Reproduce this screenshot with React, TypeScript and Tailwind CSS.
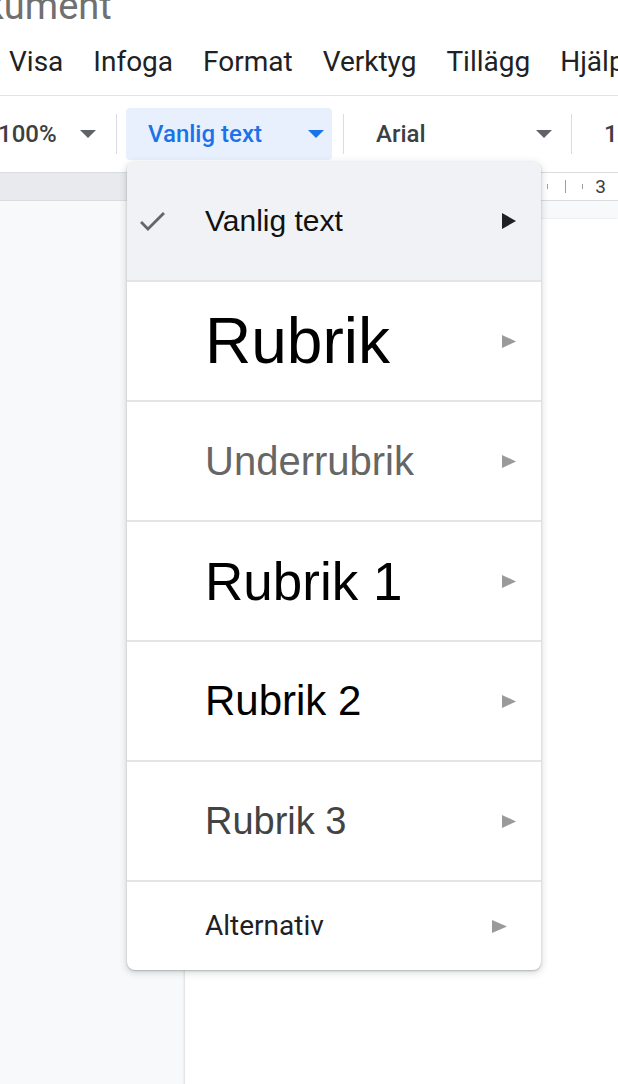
const menus = ["Visa", "Infoga", "Format", "Verktyg", "Tillägg", "Hjälp"];

const styles = [
  { label: "Vanlig text", cls: "text-[30px] text-[#111]", selected: true },
  { label: "Rubrik", cls: "text-[64px] text-black" },
  { label: "Underrubrik", cls: "text-[40px] text-[#666]" },
  { label: "Rubrik 1", cls: "text-[53px] text-black" },
  { label: "Rubrik 2", cls: "text-[42px] text-black" },
  { label: "Rubrik 3", cls: "text-[38px] text-[#434343]" },
];

function Caret({ color }: { color: string }) {
  return (
    <svg width="16" height="8" viewBox="0 0 10 5" className="shrink-0">
      <path d="M0 0 L5 5 L10 0z" fill={color} />
    </svg>
  );
}

function Arrow({ dark }: { dark?: boolean }) {
  return dark ? (
    <svg width="14" height="16" viewBox="0 0 14 16" className="shrink-0">
      <polygon points="0,0 14,8 0,16" fill="#202124" />
    </svg>
  ) : (
    <svg width="14" height="13" viewBox="0 0 14 13" className="shrink-0">
      <polygon points="0,0 14,6.5 0,13" fill="#9a9a9a" />
    </svg>
  );
}

function Check() {
  return (
    <svg width="25" height="19" viewBox="3.4 5.6 17.6 13.4">
      <path d="M9 16.17L4.83 12l-1.42 1.41L9 19 21 7l-1.41-1.41z" fill="#666" />
    </svg>
  );
}

export default function App() {
  return (
    <div className="relative w-[618px] h-[1084px] overflow-hidden bg-white font-['Roboto',sans-serif]">
      {/* title */}
      <div className="h-[40px] overflow-hidden">
        <div className="-mt-[13px] -ml-[62px] text-[38px] leading-[38px] text-[#707070] whitespace-nowrap">
          Dokument
        </div>
      </div>

      {/* menu bar */}
      <div className="h-[56px] pb-[11px] border-b border-[#e3e3e3] flex items-center gap-[30px] pl-[9px] text-[28px] leading-none text-[#202124] whitespace-nowrap">
        {menus.map((m) => (
          <span key={m} className="shrink-0">{m}</span>
        ))}
      </div>

      {/* toolbar */}
      <div className="h-[76px] flex items-center text-[24px] leading-none font-medium text-[#3c4043] whitespace-nowrap">
        <div className="w-[116px] shrink-0 flex items-center">
          <span className="w-[82px] shrink-0 -ml-[2px]">100%</span>
          <Caret color="#5f6368" />
        </div>
        <div className="w-px h-[40px] shrink-0 bg-[#dadce0]" />
        <div className="ml-[9px] w-[206px] h-[52px] shrink-0 rounded-[4px] bg-[#e8f0fe] flex items-center justify-between pl-[22px] pr-[8px] text-[#1a73e8]">
          <span>Vanlig text</span>
          <Caret color="#1a73e8" />
        </div>
        <div className="ml-[11px] w-px h-[40px] shrink-0 bg-[#dadce0]" />
        <div className="w-[227px] shrink-0 flex items-center justify-between pl-[32px] pr-[19px]">
          <span>Arial</span>
          <Caret color="#5f6368" />
        </div>
        <div className="w-px h-[40px] shrink-0 bg-[#dadce0]" />
        <span className="ml-[32px] shrink-0">11</span>
      </div>

      {/* ruler */}
      <div className="h-[29px] flex border-y border-[#dadce0]">
        <div className="w-[200px] bg-[#e8eaed]" />
        <div className="flex-1 bg-white flex items-center justify-end pr-[12px] text-[#3c4043]">
          <div className="w-px h-[5px] bg-[#9aa0a6]" />
          <div className="ml-[17px] w-px h-[13px] bg-[#9aa0a6]" />
          <div className="ml-[16px] w-px h-[5px] bg-[#9aa0a6]" />
          <span className="ml-[12px] text-[19px] leading-none">3</span>
        </div>
      </div>

      {/* canvas */}
      <div className="h-[900px] bg-[#f8f9fa] pt-[18px] pl-[185px] flex">
        <div className="flex-1 bg-white shadow-[-1px_0_2px_rgba(60,64,67,0.15)]" />
      </div>

      {/* style dropdown */}
      <div className="absolute left-[127px] top-[162px] w-[414px] bg-white rounded-[8px] overflow-hidden shadow-[0_2px_6px_2px_rgba(60,64,67,0.15),0_1px_2px_rgba(60,64,67,0.3)]">
        {styles.map((s) => (
          <div key={s.label}>
            <div
              className={
                "h-[118px] flex items-center pr-[25px] " +
                (s.selected ? "bg-[#f1f2f5]" : "bg-white")
              }
            >
              <div className="w-[78px] pl-[13px] flex items-center">
                {s.selected && <Check />}
              </div>
              <span
                className={
                  "flex-1 leading-none whitespace-nowrap font-['Liberation_Sans',Arial,sans-serif] " +
                  s.cls
                }
              >
                {s.label}
              </span>
              <Arrow dark={s.selected} />
            </div>
            <div className="h-[2px] bg-[#e4e4e4]" />
          </div>
        ))}
        <div className="h-[88px] flex items-center pl-[78px] pr-[34px]">
          <span className="flex-1 text-[28px] leading-none text-[#202124]">Alternativ</span>
          <svg width="15" height="13" viewBox="0 0 15 13" className="shrink-0">
            <polygon points="0,0 15,6.5 0,13" fill="#9a9a9a" />
          </svg>
        </div>
      </div>
    </div>
  );
}
